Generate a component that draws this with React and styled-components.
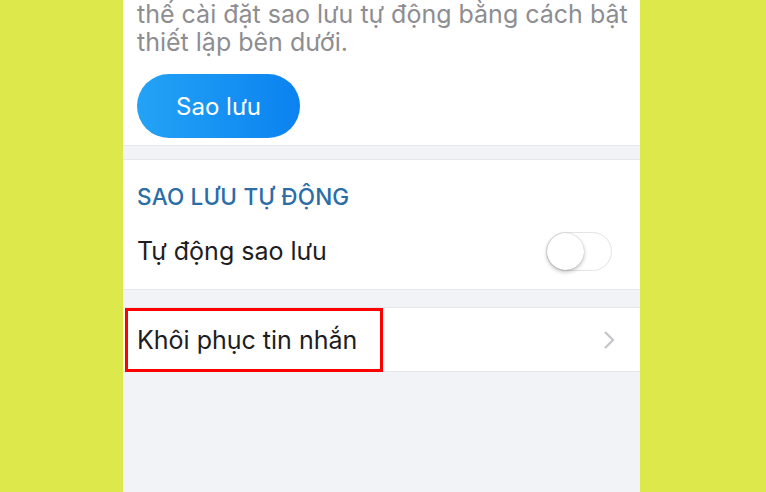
import React from 'react';
import styled, { createGlobalStyle } from 'styled-components';

const GlobalStyle = createGlobalStyle`
  html, body {
    margin: 0;
    padding: 0;
    background: #dde94b;
  }
  body {
    font-family: Inter, "Noto Sans", "Liberation Sans", sans-serif;
  }
`;

const Page = styled.div`
  width: 766px;
  height: 492px;
  overflow: hidden;
  background: #dde94b;
  padding-left: 123px;
  box-sizing: border-box;
`;

const Phone = styled.div`
  width: 517px;
  height: 100%;
  background: #f2f3f6;
  display: flex;
  flex-direction: column;
`;

const Card = styled.div`
  background: #ffffff;
  padding: ${p => p.$pad || '0 14px'};
  border-bottom: 1px solid #e6e7ea;
  border-top: ${p => (p.$noTop ? 'none' : '1px solid #e6e7ea')};
`;

const Gap = styled.div`
  height: ${p => p.$h}px;
  flex: none;
`;

const Description = styled.p`
  margin: 0;
  font-size: 25px;
  line-height: 28px;
  color: #8d8d92;
  white-space: nowrap;
`;

const PrimaryButton = styled.button`
  margin: 18px 0 7px;
  width: 163px;
  height: 64px;
  border: none;
  border-radius: 32px;
  background: linear-gradient(90deg, #23a3f6 0%, #0b82f0 100%);
  color: #ffffff;
  font-family: inherit;
  font-size: 24px;
  display: block;
`;

const SectionTitle = styled.div`
  padding-top: 21px;
  font-size: 22.5px;
  line-height: 32px;
  font-weight: 500;
  color: #2a6da7;
  letter-spacing: 0.2px;
`;

const Row = styled.div`
  position: relative;
  height: ${p => p.$h}px;
  display: flex;
  align-items: center;
  justify-content: space-between;
`;

const RowLabel = styled.span`
  font-size: 25px;
  color: #1d1d1f;
`;

const Track = styled.div`
  width: 64px;
  height: 37px;
  border: 1px solid #e3e3e8;
  border-radius: 20px;
  background: #ffffff;
  margin-right: 28px;
  position: relative;
  flex: none;
`;

const Knob = styled.div`
  position: absolute;
  left: 0;
  top: 0;
  width: 37px;
  height: 37px;
  border-radius: 50%;
  background: #ffffff;
  box-shadow: 0 2px 4px rgba(0, 0, 0, 0.25), 0 0 1px rgba(0, 0, 0, 0.3);
`;

const Highlight = styled.div`
  position: absolute;
  left: -12px;
  top: 0;
  width: 252px;
  height: 58px;
  border: 3px solid #ff0000;
`;

const Chevron = () => (
  <svg width="14" height="20" viewBox="0 0 14 20" style={{ marginRight: 24 }}>
    <path d="M3 2 L11 10 L3 18" fill="none" stroke="#c4c4c9" strokeWidth="2.2" />
  </svg>
);

export default function App() {
  return (
    <Page>
      <GlobalStyle />
      <Phone>
        <Card $pad="0 14px" $noTop>
          <Description>
            thế cài đặt sao lưu tự động bằng cách bật
            <br />
            thiết lập bên dưới.
          </Description>
          <PrimaryButton>Sao lưu</PrimaryButton>
        </Card>
        <Gap $h={13} />
        <Card $pad="0 0 0 14px">
          <SectionTitle>SAO LƯU TỰ ĐỘNG</SectionTitle>
          <Row $h={76}>
            <RowLabel>Tự động sao lưu</RowLabel>
            <Track>
              <Knob />
            </Track>
          </Row>
        </Card>
        <Gap $h={17} />
        <Card $pad="0 0 0 14px">
          <Row $h={63}>
            <Highlight />
            <RowLabel>Khôi phục tin nhắn</RowLabel>
            <Chevron />
          </Row>
        </Card>
      </Phone>
    </Page>
  );
}
